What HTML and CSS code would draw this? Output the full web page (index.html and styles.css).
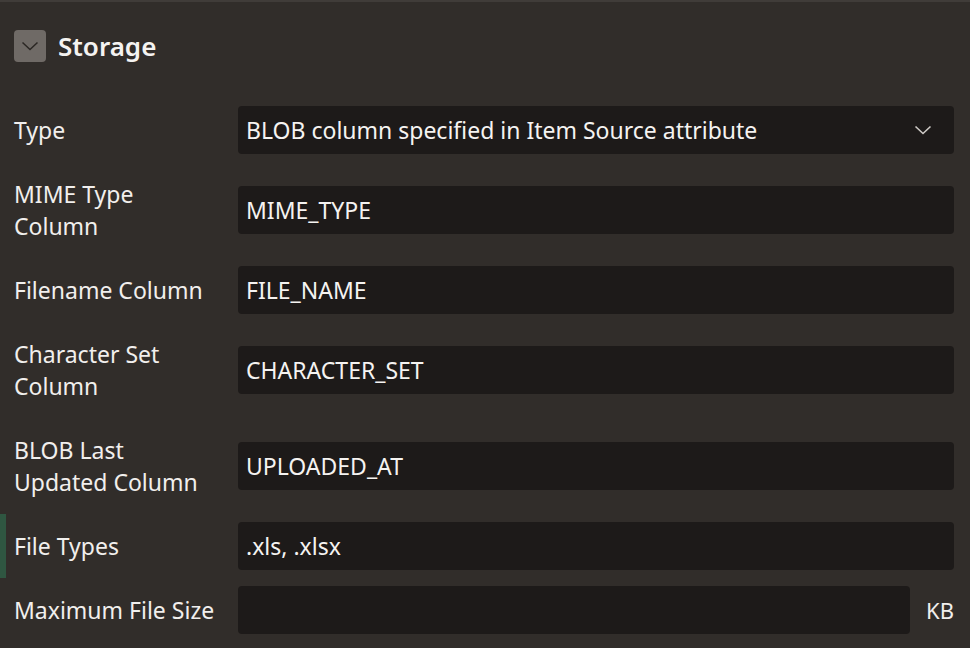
FILE: index.html
```html
<!DOCTYPE html>
<html lang="en">
<head>
<meta charset="UTF-8" />
<title>Storage</title>
<link rel="stylesheet" href="styles.css">
</head>
<body>
  <div class="topbar"></div>
  <section class="region">
    <div class="region-header">
      <button class="toggle" aria-label="Collapse">
        <svg width="18" height="10" viewBox="0 0 18 10"><path d="M1.5 1.5 L9 8.5 L16.5 1.5" fill="none" stroke="#2b2724" stroke-width="1.5"/></svg>
      </button>
      <h2>Storage</h2>
    </div>

    <div class="field">
      <label>Type</label>
      <div class="input select">
        <span>BLOB column specified in Item Source attribute</span>
        <svg class="chev" width="18" height="10" viewBox="0 0 18 10"><path d="M1.5 1.5 L9 8.5 L16.5 1.5" fill="none" stroke="#cfcbc7" stroke-width="1.6"/></svg>
      </div>
    </div>

    <div class="field">
      <label>MIME Type<br>Column</label>
      <div class="input">MIME_TYPE</div>
    </div>

    <div class="field">
      <label>Filename Column</label>
      <div class="input">FILE_NAME</div>
    </div>

    <div class="field field-wide">
      <label>Character Set<br>Column</label>
      <div class="input">CHARACTER_SET</div>
    </div>

    <div class="field">
      <label>BLOB Last<br>Updated Column</label>
      <div class="input">UPLOADED_AT</div>
    </div>

    <div class="field field-changed">
      <label>File Types</label>
      <div class="input">.xls, .xlsx</div>
    </div>

    <div class="field">
      <label>Maximum File Size</label>
      <div class="input"></div>
      <span class="unit">KB</span>
    </div>
  </section>
</body>
</html>
```

FILE: styles.css
```css
* {
  box-sizing: border-box;
}

body {
  margin: 0;
  background: #312d2a;
  color: #f1efed;
  font-family: 'Noto Sans', 'Open Sans', sans-serif;
  height: 648px;
  overflow: hidden;
}

.topbar {
  height: 2px;
  background: #403c39;
}

.region {
  padding: 28px 16px 0 0;
}

.region-header {
  display: flex;
  align-items: center;
  gap: 12px;
  height: 32px;
  padding-left: 14px;
  margin-bottom: 36px;
}

.toggle {
  width: 32px;
  height: 32px;
  border: none;
  border-radius: 4px;
  background: #6f6a66;
  display: flex;
  align-items: center;
  justify-content: center;
  padding: 0;
}

.region-header h2 {
  margin: 0;
  font-size: 26px;
  font-weight: 600;
  color: #f5f3f1;
}

/* Form rows */

.field {
  display: flex;
  align-items: center;
  min-height: 64px;
  margin-bottom: 16px;
  padding-left: 14px;
}

.field label {
  width: 224px;
  flex: none;
  font-size: 23px;
  line-height: 32px;
  color: #f1efed;
}

.field-wide {
  margin-bottom: 32px;
}

.field-changed {
  margin-bottom: 0;
  box-shadow: inset 6px 0 0 #2f5641;
}

.input {
  flex: 1;
  height: 48px;
  background: #1d1a19;
  border-radius: 4px;
  padding: 0 8px;
  display: flex;
  align-items: center;
  font-size: 23px;
  color: #f5f3f1;
}

.select {
  justify-content: space-between;
  padding-right: 22px;
}

.unit {
  margin-left: 16px;
  font-size: 22px;
  color: #f1efed;
}
```
